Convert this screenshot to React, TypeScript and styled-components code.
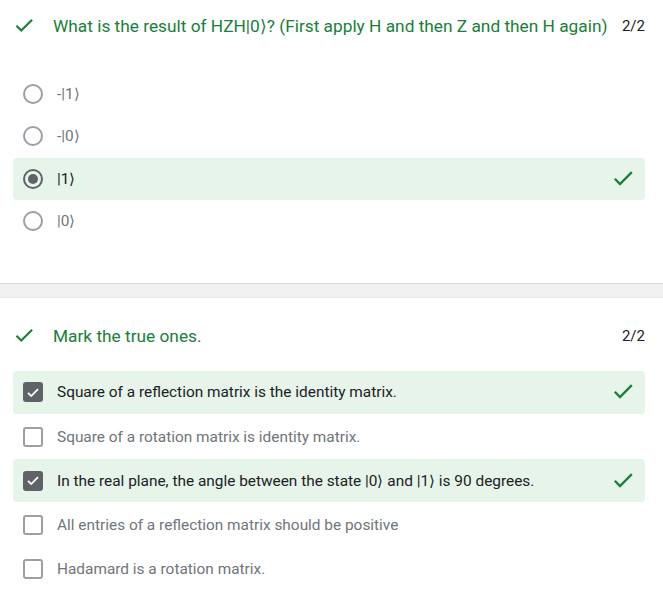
import React from "react";
import styled, { createGlobalStyle } from "styled-components";

const GlobalStyle = createGlobalStyle`
  html, body { margin: 0; padding: 0; background: #ffffff; }
  body { font-family: Roboto, "Noto Sans", Arial, sans-serif; color: #202124; }
  * { box-sizing: border-box; }
`;

const Page = styled.div`
  width: 663px;
  display: flex;
  flex-direction: column;
`;

const Section = styled.section<{ $top: number; $bottom: number }>`
  display: flex;
  flex-direction: column;
  padding: ${(p) => p.$top}px 0 ${(p) => p.$bottom}px;
`;

const Divider = styled.div`
  height: 15px;
  background: #f0f0f0;
  border-top: 1px solid #dadce0;
  border-bottom: 1px solid #e8e8e8;
`;

const Header = styled.div<{ $gapAfter: number }>`
  display: flex;
  align-items: center;
  padding: 0 18px 0 13px;
  min-height: 22px;
  margin-bottom: ${(p) => p.$gapAfter}px;
`;

const HeaderIcon = styled.span`
  display: flex;
  width: 22px;
  height: 22px;
  margin-right: 18px;
  color: #188038;
`;

const Title = styled.div`
  flex: 1;
  font-size: 17.3px;
  color: #188038;
  line-height: 22px;
  white-space: nowrap;
`;

const Score = styled.div`
  font-size: 15px;
  color: #202124;
  margin-left: 8px;
`;

const List = styled.div<{ $gap: number }>`
  display: flex;
  flex-direction: column;
  gap: ${(p) => p.$gap}px;
`;

const Row = styled.div<{ $correct?: boolean; $h: number }>`
  display: flex;
  align-items: center;
  margin: 0 18px 0 13px;
  height: ${(p) => p.$h}px;
  padding: 0 10px 0 10px;
  border-radius: 4px;
  background: ${(p) => (p.$correct ? "#e6f4ea" : "transparent")};
`;

const Radio = styled.span<{ $on?: boolean }>`
  width: 20px;
  height: 20px;
  border-radius: 50%;
  border: 2px solid ${(p) => (p.$on ? "#5f6368" : "#9aa0a6")};
  display: flex;
  align-items: center;
  justify-content: center;
  flex-shrink: 0;
  &::after {
    content: "";
    display: ${(p) => (p.$on ? "block" : "none")};
    width: 10px;
    height: 10px;
    border-radius: 50%;
    background: #5f6368;
  }
`;

const Box = styled.span<{ $on?: boolean }>`
  width: 20px;
  height: 20px;
  border-radius: 3px;
  border: 2px solid ${(p) => (p.$on ? "#5f6368" : "#9aa0a6")};
  background: ${(p) => (p.$on ? "#5f6368" : "#ffffff")};
  display: flex;
  align-items: center;
  justify-content: center;
  flex-shrink: 0;
  color: #ffffff;
`;

const Label = styled.span<{ $dark?: boolean }>`
  flex: 1;
  margin-left: 14px;
  font-size: 15.4px;
  color: ${(p) => (p.$dark ? "#202124" : "#70757a")};
`;

const RowCheck = styled.span`
  display: flex;
  color: #188038;
`;

const CheckIcon = ({ size }: { size: number }) => (
  <svg width={size} height={size} viewBox="0 0 24 24" fill="none" stroke="currentColor" strokeWidth="2.3" strokeLinecap="square">
    <path d="M4.6 12.6L9 17 20 6" />
  </svg>
);

const BoxCheck = () => (
  <svg width="17" height="17" viewBox="0 0 24 24" fill="none" stroke="currentColor" strokeWidth="2.6">
    <path d="M4.5 12.5l4.8 4.8L19.5 7" />
  </svg>
);

const radioOptions = [
  { text: "-|1⟩", on: false },
  { text: "-|0⟩", on: false },
  { text: "|1⟩", on: true },
  { text: "|0⟩", on: false },
];

const boxOptions = [
  { text: "Square of a reflection matrix is the identity matrix.", on: true },
  { text: "Square of a rotation matrix is identity matrix.", on: false },
  { text: "In the real plane, the angle between the state |0⟩ and |1⟩ is 90 degrees.", on: true },
  { text: "All entries of a reflection matrix should be positive", on: false },
  { text: "Hadamard is a rotation matrix.", on: false },
];

export default function App() {
  return (
    <Page>
      <GlobalStyle />
      <Section $top={15} $bottom={40.8}>
        <Header $gapAfter={36}>
          <HeaderIcon>
            <CheckIcon size={22} />
          </HeaderIcon>
          <Title>What is the result of HZH|0⟩? (First apply H and then Z and then H again)</Title>
          <Score>2/2</Score>
        </Header>
        <List $gap={0}>
          {radioOptions.map((o) => (
            <Row key={o.text} $correct={o.on} $h={42.3}>
              <Radio $on={o.on} />
              <Label $dark={o.on}>{o.text}</Label>
              {o.on && (
                <RowCheck>
                  <CheckIcon size={24} />
                </RowCheck>
              )}
            </Row>
          ))}
        </List>
      </Section>
      <Divider />
      <Section $top={27} $bottom={20}>
        <Header $gapAfter={24}>
          <HeaderIcon>
            <CheckIcon size={22} />
          </HeaderIcon>
          <Title>Mark the true ones.</Title>
          <Score>2/2</Score>
        </Header>
        <List $gap={1.25}>
          {boxOptions.map((o) => (
            <Row key={o.text} $correct={o.on} $h={43}>
              <Box $on={o.on}>{o.on && <BoxCheck />}</Box>
              <Label $dark={o.on}>{o.text}</Label>
              {o.on && (
                <RowCheck>
                  <CheckIcon size={24} />
                </RowCheck>
              )}
            </Row>
          ))}
        </List>
      </Section>
    </Page>
  );
}
